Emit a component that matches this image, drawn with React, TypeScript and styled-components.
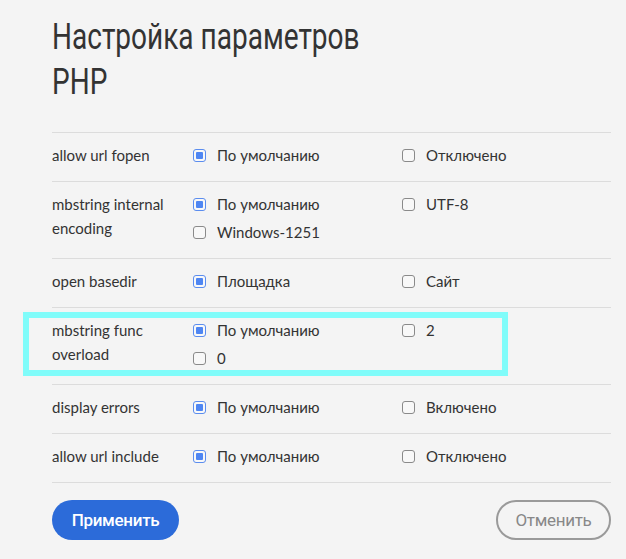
import React from "react";
import styled, { createGlobalStyle } from "styled-components";

const Global = createGlobalStyle`
  html, body { margin: 0; padding: 0; background: #f4f4f4; }
  body { font-family: Lato, "Noto Sans", sans-serif; color: #333; }
`;

const Page = styled.div`
  padding: 14px 15px 20px 52px;
  width: 559px;
`;

const Title = styled.h1`
  margin: 0 0 28px;
  font-family: Roboto, "DejaVu Sans", sans-serif;
  font-weight: 400;
  font-size: 37px;
  line-height: 45px;
  color: #333;
  width: 440px;
  transform: scaleX(0.757);
  transform-origin: left top;
`;

const Table = styled.div`
  border-bottom: 1px solid #dcdcdc;
`;

const Row = styled.div`
  position: relative;
  display: grid;
  grid-template-columns: 141px 209px 1fr;
  border-top: 1px solid #dcdcdc;
  padding: 10px 0 14px;
`;

const Label = styled.div`
  font-size: 15px;
  line-height: 24px;
  padding-right: 10px;
`;

const Options = styled.div`
  display: flex;
  flex-direction: column;
  gap: 4px;
`;

const Option = styled.label`
  display: flex;
  align-items: center;
  gap: 11px;
  height: 24px;
  font-size: 15px;
`;

const Box = styled.span<{ $checked?: boolean }>`
  box-sizing: border-box;
  width: 13px;
  height: 13px;
  border-radius: 3px;
  border: 1px solid ${(p) => (p.$checked ? "#5b8def" : "#8a8a8a")};
  background: #f8f8f8;
  display: flex;
  align-items: center;
  justify-content: center;
  &::after {
    content: "";
    width: 7px;
    height: 7px;
    border-radius: 1px;
    background: ${(p) => (p.$checked ? "#4f86f2" : "transparent")};
  }
`;

const Highlight = styled.div`
  position: absolute;
  left: -29px;
  top: 4px;
  width: 485px;
  height: 64px;
  box-sizing: border-box;
  border: 6px solid #80fcfa;
  pointer-events: none;
`;

const Actions = styled.div`
  display: flex;
  justify-content: space-between;
  margin-top: 17px;
`;

const Button = styled.button<{ $primary?: boolean }>`
  box-sizing: border-box;
  height: 40px;
  border-radius: 20px;
  font-family: Roboto, sans-serif;
  font-size: 17px;
  letter-spacing: -0.3px;
  cursor: pointer;
  ${(p) =>
    p.$primary
      ? `width: 127px; background: #2c6bd9; color: #fff; border: none; font-weight: 500;`
      : `width: 115px; background: transparent; color: #888; border: 2px solid #9a9a9a; font-weight: 400;`}
`;

type Opt = { text: string; checked?: boolean };
type RowData = { label: string[]; a: Opt[]; b: Opt[]; highlight?: boolean };

const rows: RowData[] = [
  { label: ["allow url fopen"], a: [{ text: "По умолчанию", checked: true }], b: [{ text: "Отключено" }] },
  {
    label: ["mbstring internal", "encoding"],
    a: [{ text: "По умолчанию", checked: true }, { text: "Windows-1251" }],
    b: [{ text: "UTF-8" }],
  },
  { label: ["open basedir"], a: [{ text: "Площадка", checked: true }], b: [{ text: "Сайт" }] },
  {
    label: ["mbstring func", "overload"],
    a: [{ text: "По умолчанию", checked: true }, { text: "0" }],
    b: [{ text: "2" }],
    highlight: true,
  },
  { label: ["display errors"], a: [{ text: "По умолчанию", checked: true }], b: [{ text: "Включено" }] },
  { label: ["allow url include"], a: [{ text: "По умолчанию", checked: true }], b: [{ text: "Отключено" }] },
];

const OptList = ({ items }: { items: Opt[] }) => (
  <Options>
    {items.map((o) => (
      <Option key={o.text}>
        <Box $checked={o.checked} />
        {o.text}
      </Option>
    ))}
  </Options>
);

export default function App() {
  return (
    <Page>
      <Global />
      <Title>Настройка параметров PHP</Title>
      <Table>
        {rows.map((r) => (
          <Row key={r.label.join(" ")}>
            <Label>
              {r.label.map((l, i) => (
                <React.Fragment key={l}>
                  {i > 0 && <br />}
                  {l}
                </React.Fragment>
              ))}
            </Label>
            <OptList items={r.a} />
            <OptList items={r.b} />
            {r.highlight && <Highlight />}
          </Row>
        ))}
      </Table>
      <Actions>
        <Button $primary>Применить</Button>
        <Button>Отменить</Button>
      </Actions>
    </Page>
  );
}
